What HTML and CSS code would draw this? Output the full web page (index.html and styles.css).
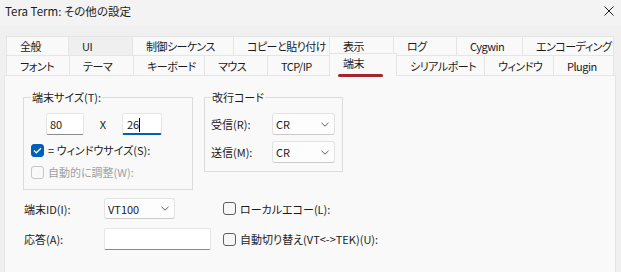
FILE: index.html
```html
<!DOCTYPE html>
<html lang="ja">
<head>
    <meta charset="UTF-8">
    <title>Tera Term: その他の設定</title>
    <link rel="stylesheet" href="styles.css">
</head>
<body>

<div class="titlebar">
    <span class="title">Tera Term: その他の設定</span>
    <svg class="close" viewBox="0 0 10 10"><path d="M0.5 0.5l9 9M9.5 0.5l-9 9" stroke="#1b1b1b" stroke-width="1"/></svg>
</div>

<div class="tabs">
    <div class="tab-row row-top">
        <div class="tab">全般</div>
        <div class="tab hover">UI</div>
        <div class="tab">制御シーケンス</div>
        <div class="tab">コピーと貼り付け</div>
        <div class="tab">表示</div>
        <div class="tab">ログ</div>
        <div class="tab">Cygwin</div>
        <div class="tab">エンコーディング</div>
    </div>
    <div class="tab-row row-bottom">
        <div class="tab">フォント</div>
        <div class="tab">テーマ</div>
        <div class="tab">キーボード</div>
        <div class="tab">マウス</div>
        <div class="tab">TCP/IP</div>
        <div class="tab active">端末</div>
        <div class="tab">シリアルポート</div>
        <div class="tab">ウィンドウ</div>
        <div class="tab">Plugin</div>
    </div>
</div>

<div class="panel">
    <div class="groups">
        <fieldset class="group size-group">
            <legend>端末サイズ(T):</legend>
            <div class="size-row">
                <div class="edit small">80</div>
                <span class="times">X</span>
                <div class="edit small focused">26<i class="caret"></i></div>
            </div>
            <div class="check checked">
                <span class="box"><svg width="9" height="7" viewBox="0 0 9 7"><path d="M1 3.5l2.3 2.3L8 1.2" fill="none" stroke="#fff" stroke-width="1.2"/></svg></span>
                = ウィンドウサイズ(S):
            </div>
            <div class="check disabled">
                <span class="box"></span>
                自動的に調整(W):
            </div>
        </fieldset>

        <fieldset class="group newline-group">
            <legend>改行コード</legend>
            <div class="field-row">
                <span>受信(R):</span>
                <div class="combo">CR<svg class="chevron" viewBox="0 0 8 5"><path d="M0.5 0.8l3.5 3.4 3.5-3.4" fill="none" stroke="#5d5d5d"/></svg></div>
            </div>
            <div class="field-row">
                <span>送信(M):</span>
                <div class="combo">CR<svg class="chevron" viewBox="0 0 8 5"><path d="M0.5 0.8l3.5 3.4 3.5-3.4" fill="none" stroke="#5d5d5d"/></svg></div>
            </div>
        </fieldset>
    </div>

    <div class="options">
        <span class="label">端末ID(I):</span>
        <div class="combo id">VT100<svg class="chevron" viewBox="0 0 8 5"><path d="M0.5 0.8l3.5 3.4 3.5-3.4" fill="none" stroke="#5d5d5d"/></svg></div>
        <div class="check"><span class="box"></span>ローカルエコー(L):</div>

        <span class="label">応答(A):</span>
        <div class="edit answer"></div>
        <div class="check"><span class="box"></span>自動切り替え(VT&lt;-&gt;TEK)(U):</div>
    </div>
</div>

</body>
</html>
```

FILE: styles.css
```css
body {
    margin: 0;
    background-color: #f0f0f0;
    font-family: "Noto Sans CJK JP", "Noto Sans", sans-serif;
    font-size: 11px;
    font-feature-settings: "palt";
    color: #1b1b1b;
    overflow: hidden;
}

.titlebar {
    height: 26px;
    box-sizing: border-box;
    padding: 3px 7px 0 5px;
    display: flex;
    justify-content: space-between;
    align-items: flex-start;
    background-color: #f3f3f3;
}

.title {
    font-size: 11.5px;
    line-height: 16px;
}

.close {
    width: 10px;
    height: 10px;
    margin-top: 3px;
}

/* tabs */
.tabs {
    margin: 10px 0 0 6px;
    width: 608px;
}

.tab-row {
    display: grid;
}

.row-top {
    grid-template-columns: 62px 64px 101px 96px 64px 63px 66px 92px;
    grid-template-rows: 19px;
}

.row-bottom {
    grid-template-columns: 63px 64px 71px 63px 62px 67px 88px 69px 61px;
    grid-template-rows: 20px;
}

.tab {
    box-sizing: border-box;
    border-top: 1px solid #e5e5e5;
    border-left: 1px solid #e5e5e5;
    background-color: #f9f9f9;
    padding-left: 13px;
    display: flex;
    align-items: center;
    white-space: nowrap;
    letter-spacing: -0.5px;
    overflow: hidden;
}

.tab:last-child {
    border-right: 1px solid #e5e5e5;
}

.tab.hover {
    background-color: #efefef;
}

.tab.active {
    position: relative;
    z-index: 1;
    overflow: visible;
    height: 23px;
    margin-top: -2px;
    margin-right: -1px;
    border-right: 1px solid #e5e5e5;
    align-items: flex-start;
    line-height: 18px;
}

.tab.active::after {
    content: "";
    position: absolute;
    left: 8px;
    bottom: -1px;
    width: 45px;
    height: 3px;
    border-radius: 2px;
    background-color: #a4262c;
}

/* panel */
.panel {
    margin-left: 4px;
    width: 612px;
    height: 210px;
    box-sizing: border-box;
    border: 1px solid #e5e5e5;
    background-color: #f9f9f9;
    padding: 13px 18px 0;
}

.groups {
    display: flex;
    gap: 11px;
    align-items: flex-start;
}

.group {
    margin: 0;
    min-width: 0;
    box-sizing: border-box;
    border: 1px solid #dcdcdc;
}

.group legend {
    padding: 0 1px;
    line-height: 16px;
}

.size-group {
    width: 170px;
    padding: 8px 7px 9px;
}

.newline-group {
    width: 139px;
    padding: 8px 7px 8px 6px;
}

.size-row {
    display: flex;
    align-items: center;
    margin-left: 15px;
    margin-bottom: 7px;
}

.times {
    width: 38px;
    text-align: center;
}

.edit {
    height: 22px;
    box-sizing: border-box;
    background-color: #ffffff;
    border: 1px solid #e5e5e5;
    border-bottom-color: #8a8a8a;
    border-radius: 2px;
    padding-left: 3px;
    line-height: 20px;
}

.edit.small {
    width: 38px;
}

.edit.focused {
    width: 40px;
    padding-left: 4px;
    border-bottom: 2px solid #005fb8;
}

.caret {
    display: inline-block;
    width: 1px;
    height: 14px;
    background-color: #000;
    vertical-align: -3px;
}

.edit.answer {
    width: 107px;
}

.check {
    display: flex;
    align-items: center;
    gap: 4px;
    height: 16px;
    white-space: nowrap;
}

.check + .check {
    margin-top: 6px;
}

.box {
    flex: none;
    width: 13px;
    height: 13px;
    box-sizing: border-box;
    border: 1px solid #5f5f5f;
    border-radius: 3px;
    background-color: #f6f6f6;
    display: flex;
    align-items: center;
    justify-content: center;
}

.check.checked .box {
    background-color: #005fb8;
    border-color: #005fb8;
}

.check.disabled {
    color: #a0a0a0;
}

.check.disabled .box {
    border-color: #c6c6c6;
    background-color: #f9f9f9;
}

.field-row {
    display: flex;
    align-items: center;
    justify-content: space-between;
    height: 22px;
}

.field-row + .field-row {
    margin-top: 6px;
}

.combo {
    width: 63px;
    height: 22px;
    box-sizing: border-box;
    background-color: #fdfdfd;
    border: 1px solid #e2e2e2;
    border-bottom-color: #cacaca;
    border-radius: 3px;
    padding: 0 5px 0 3px;
    display: flex;
    align-items: center;
    justify-content: space-between;
}

.chevron {
    width: 8px;
    height: 5px;
}

.options {
    display: grid;
    grid-template-columns: 81px 119px auto;
    grid-template-rows: 21px 22px;
    row-gap: 9px;
    align-items: center;
    margin-top: 8px;
}

.label {
    padding-left: 1px;
}

.combo.id {
    width: 71px;
    height: 21px;
}
```
